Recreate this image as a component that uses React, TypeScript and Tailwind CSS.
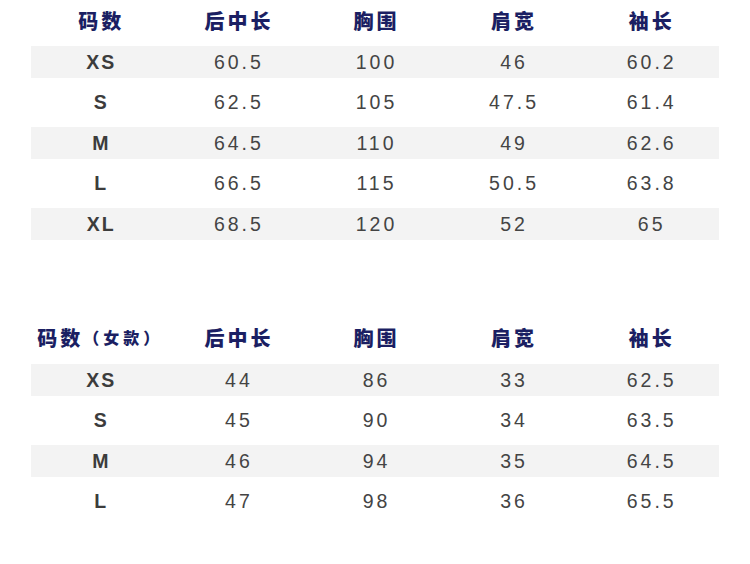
import React from "react";

const t1 = [
  ["XS", "60.5", "100", "46", "60.2"],
  ["S", "62.5", "105", "47.5", "61.4"],
  ["M", "64.5", "110", "49", "62.6"],
  ["L", "66.5", "115", "50.5", "63.8"],
  ["XL", "68.5", "120", "52", "65"],
];
const t2 = [
  ["XS", "44", "86", "33", "62.5"],
  ["S", "45", "90", "34", "63.5"],
  ["M", "46", "94", "35", "64.5"],
  ["L", "47", "98", "36", "65.5"],
];

function Header({ first }: { first: React.ReactNode }) {
  const heads = ["后中长", "胸围", "肩宽", "袖长"];
  return (
    <div className="grid grid-cols-5 h-[44px] items-center text-[20px] font-black text-[#1b1f63] tracking-[3px]">
      <div className="text-center pl-[3px]">{first}</div>
      {heads.map((h) => (
        <div key={h} className="text-center pl-[3px]">
          {h}
        </div>
      ))}
    </div>
  );
}

function Rows({ rows }: { rows: string[][] }) {
  return (
    <div className="flex flex-col gap-[8.5px]">
      {rows.map((r, i) => (
        <div
          key={i}
          className={`grid grid-cols-5 h-[32px] items-center text-[19.5px] tracking-[3px] pt-[1px] ${
            i % 2 === 0 ? "bg-[#f3f3f3]" : "bg-white"
          }`}
        >
          {r.map((c, j) => (
            <div
              key={j}
              className={`text-center pl-[3px] ${
                j === 0 ? "font-bold text-[#3c3c3c] tracking-[2px]" : "text-[#444444]"
              }`}
            >
              {c}
            </div>
          ))}
        </div>
      ))}
    </div>
  );
}

export default function App() {
  return (
    <div
      className="w-[750px] h-[564px] bg-white px-[31px] overflow-hidden"
      style={{ fontFamily: '"Liberation Sans", Arial, "Noto Sans CJK SC", sans-serif' }}
    >
      <div>
        <Header first="码数" />
        <div className="mt-[2px]">
          <Rows rows={t1} />
        </div>
      </div>
      <div className="mt-[77px]">
        <Header
          first={
            <span className="inline-flex items-center -ml-[2px]">
              <span>码数</span>
              <span className="text-[16px] tracking-[4px]">（女款）</span>
            </span>
          }
        />
        <div className="mt-[3px]">
          <Rows rows={t2} />
        </div>
      </div>
    </div>
  );
}
